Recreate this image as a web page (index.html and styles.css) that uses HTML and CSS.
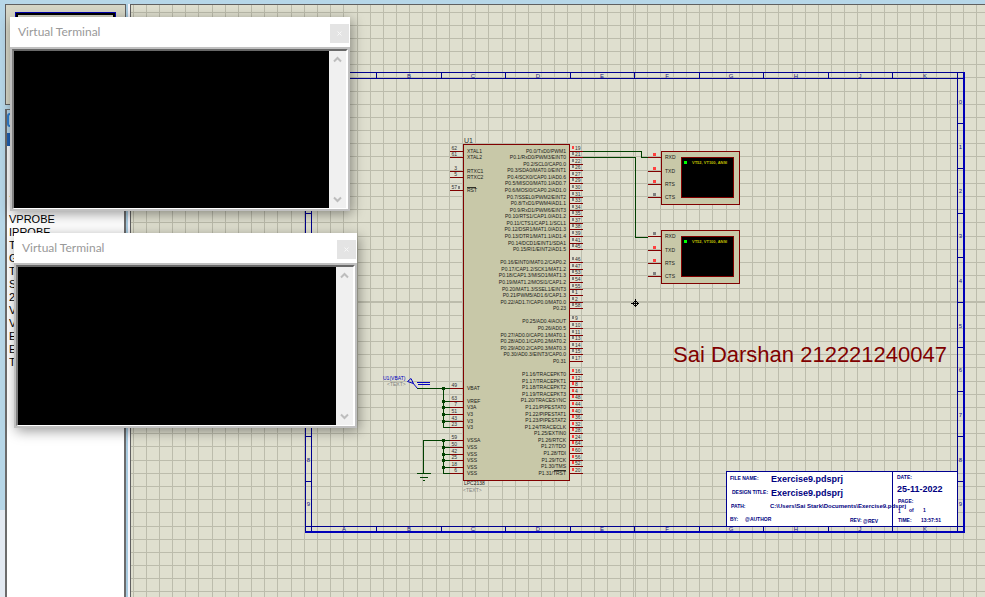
FILE: index.html
```
<!DOCTYPE html>
<html lang="en">
<head>
<meta charset="utf-8">
<title>Exercise9.pdsprj</title>
<link rel="stylesheet" href="styles.css">
</head>
<body>
<main class="workspace">
  <aside class="sidebar">
    <div class="overview"><div class="overview-sheet"></div></div>
    <div class="picker">
      <div class="picker-head"><button class="mode" aria-label="Pick"></button></div>
      <ul class="devices">
        <li>.</li><li></li><li>VPROBE</li><li>IPROBE</li><li>T</li><li>G</li><li>T</li><li>S</li><li>2</li><li>V</li><li>V</li><li>E</li><li>E</li><li>T</li>
      </ul>
    </div>
  </aside>
  <section class="canvas">
    <svg class="schematic" aria-label="Schematic"><g id="sheet" transform="translate(-131 -5)"></g></svg>
  </section>
</main>

<section class="terminal terminal-one">
  <header class="terminal-title"><h2>Virtual Terminal</h2><button class="close" aria-label="Close"><svg viewBox="0 0 19 19"><path d="M7.5 7.5l4 4M11.5 7.5l-4 4"/></svg></button></header>
  <div class="terminal-body"><div class="terminal-screen"></div>
    <div class="scroll"><button aria-label="Scroll up"><svg viewBox="0 0 9 7"><path d="M1 5.5L4.5 2 8 5.5"/></svg></button><button aria-label="Scroll down"><svg viewBox="0 0 9 7"><path d="M1 1.500L4.500 5 8 1.500"/></svg></button></div>
  </div>
</section>
<section class="terminal terminal-two">
  <header class="terminal-title"><h2>Virtual Terminal</h2><button class="close" aria-label="Close"><svg viewBox="0 0 19 19"><path d="M7.5 7.5l4 4M11.5 7.5l-4 4"/></svg></button></header>
  <div class="terminal-body"><div class="terminal-screen"></div>
    <div class="scroll"><button aria-label="Scroll up"><svg viewBox="0 0 9 7"><path d="M1 5.5L4.5 2 8 5.5"/></svg></button><button aria-label="Scroll down"><svg viewBox="0 0 9 7"><path d="M1 1.500L4.500 5 8 1.500"/></svg></button></div>
  </div>
</section>
<script src="schematic.js"></script>
</body>
</html>
```
FILE: styles.css
```
* { box-sizing: border-box; }
body {
  margin: 0;
  height: 100vh;
  overflow: hidden;
  font-family: "Liberation Sans", Arial, sans-serif;
  background: linear-gradient(to bottom, #b7d7e8 510px, #e3eaf2 510px);
}
.workspace {
  display: grid;
  grid-template-columns: 121px 1fr;
  gap: 4px;
  height: 100%;
  padding: 4px 0 0 5px;
  background: linear-gradient(to right, transparent 120px, #a9cbdf 120px 128px, #f4f4fa 128px 130px, transparent 130px) 0 4px no-repeat;
}
.sidebar { display: flex; flex-direction: column; gap: 4px; min-height: 0; }
.overview {
  height: 101px;
  padding: 7px 9px;
  border: 1px solid #606060;
  background: #d6d6c6;
}
.overview-sheet { height: 80px; border: 1px solid #0000b0; outline: 2px solid #000; outline-offset: -3px; }
.picker {
  flex: 1;
  min-height: 0;
  overflow: hidden;
  border: 2px solid #6c6c6c;
  border-top-width: 1px;
  border-bottom: 0;
  background: #fff;
}
.picker-head { height: 36px; padding: 3px 0; background: linear-gradient(to bottom, #b7d7e8 23px, #2060b0 23px); }
.mode { display: block; width: 16px; height: 14px; padding: 0; border: 2px solid #3080d0; border-radius: 3px; background: #b7d7e8; }
.devices {
  margin: 0;
  padding: 41px 0 0 2px;
  list-style: none;
  font: 11px/13px "Liberation Sans", Arial, sans-serif;
  color: #000;
}
.devices li { height: 13px; }
.canvas {
  min-width: 0;
  overflow: hidden;
  border: 1px solid #606060;
  border-right: 0;
  border-bottom: 0;
  background: #dfdfcf;
}
.schematic { display: block; width: 100%; height: 100%; }

/* Floating terminal windows */
.terminal {
  position: absolute;
  display: flex;
  flex-direction: column;
  background: #c0c0c0;
  box-shadow: 2px 3px 12px rgba(0, 0, 0, .4);
}
.terminal-one { left: 10px; top: 17px; width: 340px; height: 194px; }
.terminal-two { left: 14px; top: 233px; width: 343px; height: 195px; }
.terminal-title {
  display: flex;
  align-items: center;
  justify-content: space-between;
  height: 30px;
  padding: 0 1px 0 8px;
  background: #fff;
}
.terminal-title h2 { margin: 0; font: 12px/16px Lato, "Open Sans", sans-serif; color: #999; }
.close { width: 19px; height: 19px; margin-top: 3px; padding: 0; border: 0; background: #e4e4e4; }
.close svg { display: block; width: 19px; height: 19px; fill: none; stroke: #f8f8f8; stroke-width: 1; }
.terminal-body {
  flex: 1;
  display: flex;
  margin: 2px 2px 2px 2px;
  border: 1px solid #808080;
  border-top: 2px solid #696969;
  border-left: 2px solid #808080;
  border-right: 2px solid #fff;
  border-bottom: 1px solid #fff;
}
.terminal-screen { flex: 1; background: #000; }
.scroll {
  display: flex;
  flex-direction: column;
  justify-content: space-between;
  width: 17px;
  background: #f0f0f0;
}
.scroll button { width: 17px; height: 17px; padding: 4px; border: 0; background: none; }
.scroll svg { display: block; width: 9px; height: 7px; fill: none; stroke: #bdbdbd; stroke-width: 2; }

/* Schematic */
.grid { stroke: #bcbcac; shape-rendering: crispEdges; }
.frame { stroke: #000090; fill: none; shape-rendering: crispEdges; }
.frame-edge { stroke: #0000b8; stroke-width: 2; fill: none; shape-rendering: crispEdges; }
.ruler { fill: #202080; font-size: 6px; text-anchor: middle; }
.part { fill: #c8c8a8; stroke: #800000; shape-rendering: crispEdges; }
.pin { stroke: #800000; shape-rendering: crispEdges; }
.wire { stroke: #004000; fill: none; shape-rendering: crispEdges; }
.node { fill: #004000; }
.name { fill: #202018; font-size: 5px; }
.number { fill: #303030; font-size: 5px; }
.end { text-anchor: end; }
.ref { fill: #303030; font-size: 7px; }
.muted { fill: #808080; font-size: 5px; }
.high { fill: #ff4040; }
.low { fill: #808080; }
.screen { fill: #000; stroke: #800000; shape-rendering: crispEdges; }
.lamp { fill: #00ff00; }
.vt { fill: #c0c000; font-size: 4px; font-weight: bold; }
.probe { stroke: #0000c0; fill: none; }
.probe-label { fill: #0000c0; font-size: 5px; }
.over { stroke: #303028; stroke-width: 1; }
.note { fill: #800000; font-size: 22px; }
.block { fill: #fff; stroke: #000090; shape-rendering: crispEdges; }
.block-label { fill: #000080; font-size: 5px; font-weight: bold; }
.block-path { fill: #000080; font-size: 6px; font-weight: bold; }
.block-value { fill: #000080; font-size: 9px; font-weight: bold; }
.origin { stroke: #000; fill: none; }
```
FILE: schematic.js
```
const out = [];
const line = (c, x1, y1, x2, y2) => out.push(`<path class="${c}" d="M${x1} ${y1}L${x2} ${y2}"/>`);
const rect = (c, x, y, w, h) => out.push(`<rect class="${c}" x="${x}" y="${y}" width="${w}" height="${h}"/>`);
const text = (c, x, y, s) => out.push(`<text class="${c}" x="${x}" y="${y}">${s.replace(/</g, '&lt;')}</text>`);
const path = (c, d) => out.push(`<path class="${c}" d="${d}"/>`);

// Grid, with doubled lines through the origin
for (let i = 0; i < 160; i++) {
  const p = Math.floor(i * 13.18);
  line('grid', 133.5 + p, 0, 133.5 + p, 2000);
  line('grid', 130, 12.5 + p, 2200, 12.5 + p);
}
line('grid', 635.5, 0, 635.5, 2000);
line('grid', 130, 302.5, 2200, 302.5);

// Sheet border with rulers
path('frame', 'M305.500 72.500H963M305.500 72.500V532M311.500 72.500V532M957.500 72.500V532M305.500 78.500H963M305.500 526.500H963');
path('frame-edge', 'M964 72V533M305 532H965');
[...'ABCDEFGHJK'].forEach((s, i) => {
  const x = Math.round(344 + i * 64.5);
  text('ruler', x, 78, s);
  text('ruler', x, 531, s);
  if (i) {
    const t = Math.round(311.5 + i * 64.5) + .5;
    line('frame', t, 72, t, 78);
    line('frame', t, 526, t, 532);
  }
});
for (let i = 0; i < 10; i++) {
  const y = Math.round(104 + i * 44.7);
  text('ruler', 308.5, y, String(i));
  text('ruler', 960.5, y, String(i));
  if (i) {
    const t = Math.round(78.5 + i * 44.7) + .5;
    line('frame', 305, t, 311, t);
    line('frame', 957, t, 963, t);
  }
}

// Microcontroller U1
rect('part', 463.5, 144.5, 106, 336);
text('ref', 464, 143, 'U1');
text('name', 464, 485, 'LPC2138');
text('muted', 463, 492, '<TEXT>');
const right = [
  [0, ['P0.0/TxD0/PWM1 19', 'P0.1/RxD0/PWM3/EINT0 21', 'P0.2/SCL0/CAP0.0 22', 'P0.3/SDA0/MAT0.0/EINT1 26', 'P0.4/SCK0/CAP0.1/AD0.6 27', 'P0.5/MISO0/MAT0.1/AD0.7 29', 'P0.6/MOSI0/CAP0.2/AD1.0 30', 'P0.7/SSEL0/PWM2/EINT2 31', 'P0.8/TxD1/PWM4/AD1.1 33', 'P0.9/RxD1/PWM6/EINT3 34', 'P0.10/RTS1/CAP1.0/AD1.2 35', 'P0.11/CTS1/CAP1.1/SCL1 37', 'P0.12/DSR1/MAT1.0/AD1.3 38', 'P0.13/DTR1/MAT1.1/AD1.4 39', 'P0.14/DCD1/EINT1/SDA1 41', 'P0.15/RI1/EINT2/AD1.5 45']],
  [17, ['P0.16/EINT0/MAT0.2/CAP0.2 46', 'P0.17/CAP1.2/SCK1/MAT1.2 47', 'P0.18/CAP1.3/MISO1/MAT1.3 53', 'P0.19/MAT1.2/MOSI1/CAP1.2 54', 'P0.20/MAT1.3/SSEL1/EINT3 55', 'P0.21/PWM5/AD1.6/CAP1.3 1', 'P0.22/AD1.7/CAP0.0/MAT0.0 2', 'P0.23 58']],
  [26, ['P0.25/AD0.4/AOUT 9', 'P0.26/AD0.5 10', 'P0.27/AD0.0/CAP0.1/MAT0.1 11', 'P0.28/AD0.1/CAP0.2/MAT0.2 13', 'P0.29/AD0.2/CAP0.3/MAT0.3 14', 'P0.30/AD0.3/EINT3/CAP0.0 15', 'P0.31 17']],
  [34, ['P1.16/TRACEPKT0 16', 'P1.17/TRACEPKT1 12', 'P1.18/TRACEPKT2 8', 'P1.19/TRACEPKT3 4', 'P1.20/TRACESYNC 48', 'P1.21/PIPESTAT0 44', 'P1.22/PIPESTAT1 40', 'P1.23/PIPESTAT2 36', 'P1.24/TRACECLK 32', 'P1.25/EXTIN0 28', 'P1.26/RTCK 24', 'P1.27/TDO 64', 'P1.28/TDI 60', 'P1.29/TCK 56', 'P1.30/TMS 52', 'P1.31/TRST 20']]
];
right.forEach(([start, pins]) => pins.forEach((p, i) => {
  const [name, num] = p.split(' ');
  const y = Math.floor(151 + (start + i) * 6.575);
  text('name end', 566, y + 2, name);
  line('pin', 570, y + .5, 583, y + .5);
  rect(name === 'P0.0/TxD0/PWM1' || name.startsWith('P1') ? 'high' : 'low', 572, y - 5, 2, 3);
  text('number', 575, y - 1, num);
}));
[[151, 'XTAL1', 62], [157, 'XTAL2', 61], [171, 'RTXC1', 3], [177, 'RTXC2', 5], [190, 'RST', 57],
 [388, 'VBAT', 49], [401, 'VREF', 63], [407, 'V3A', 7], [414, 'V3', 51], [421, 'V3', 43], [427, 'V3', 23],
 [440, 'VSSA', 59], [447, 'VSS', 50], [454, 'VSS', 42], [460, 'VSS', 25], [467, 'VSS', 18], [473, 'VSS', 6]].forEach(([y, n, num]) => {
  line('pin', 450, y + .5, 463, y + .5);
  text('name', 467, y + 2, n);
  text('number end', 457, y - 1, String(num));
  if (y > 380) {
    line('wire', 443, y + .5, 450, y + .5);
    if (y !== 427 && y !== 473) rect('node', 442, y - 1, 3, 3);
  }
});
rect('low', 458, 186, 2, 3);
line('over', 467, 187.5, 476, 187.5);
line('over', 554, 470.5, 566, 470.5);

// Supply and ground wiring
path('wire', 'M417 388.500H443.500V427.500M423.500 473V440.500H443.500V473.500M417 473.500H431M420 477.500H428M423 480.500H425');
path('probe', 'M417.500 388.500L412.500 382.500M407.500 381.500L411 378.500L413.500 383.500Z');
path('probe', 'M417 382.500H430M418 384.500H430');
text('probe-label', 383, 380, 'U1(VBAT)');
text('muted', 387, 386, '<TEXT>');

// Virtual terminals on the sheet
[151, 230].forEach((y, n) => {
  rect('part', 661.5, y + .5, 78, 53);
  rect('screen', 681.5, y + 6.5, 52, 40);
  rect('lamp', 684, y + 10, 3, 3);
  text('vt', 692, y + 13, 'VT52, VT100, ANSI');
  ['RXD', 'TXD', 'RTS', 'CTS'].forEach((s, i) => {
    const py = y + [6, 20, 33, 46][i];
    line('pin', 648, py + .5, 661, py + .5);
    text('name', 665, py + 2, s);
    rect(i === 3 || (n && i === 0) ? 'low' : 'high', 653, py - 4, 3, 3);
  });
});
path('wire', 'M583 151.500H641.500V157.500H648M583 157.500H635.500V237.500H648');

path('origin', 'M631 303.500H639M635.500 299V307M632.500 303.500L635.500 300.500L638.500 303.500L635.500 306.500Z');
text('note', 673, 362, 'Sai Darshan 212221240047');

// Title block
rect('block', 726.5, 471.5, 231, 55);
line('frame', 892.5, 471, 892.5, 526);
text('block-label', 730, 480, 'FILE NAME:');
text('block-value', 771, 482, 'Exercise9.pdsprj');
text('block-label', 732, 494, 'DESIGN TITLE:');
text('block-value', 771, 496, 'Exercise9.pdsprj');
text('block-label', 731, 508, 'PATH:');
text('block-path', 770, 508, 'C:\\Users\\Sai Stark\\Documents\\Exercise9.pdsprj');
text('block-label', 730, 521, 'BY:');
text('block-label', 745, 521, '@AUTHOR');
text('block-label', 850, 522, 'REV:');
text('block-label', 863, 523, '@REV');
text('block-label', 897, 479, 'DATE:');
text('block-value', 897, 492, '25-11-2022');
text('block-label', 898, 503, 'PAGE:');
text('block-label', 898, 513, '1');
text('block-label', 909, 512, 'of');
text('block-label', 923, 512, '1');
text('block-label', 898, 522, 'TIME:');
text('block-label', 921, 522, '13:57:51');

document.getElementById('sheet').innerHTML = out.join('');
```
